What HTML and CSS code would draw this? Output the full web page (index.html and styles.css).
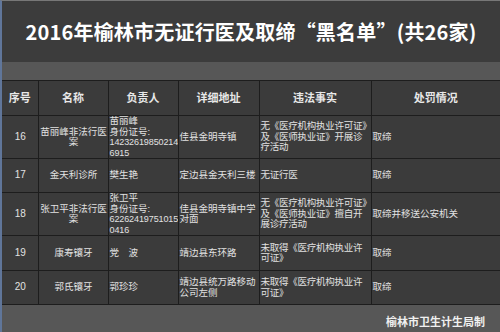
FILE: index.html
```html
<!DOCTYPE html>
<html lang="zh-CN">
<head>
<meta charset="utf-8">
<title>2016年榆林市无证行医及取缔黑名单</title>
<link rel="stylesheet" href="styles.css">
</head>
<body>
<div class="page">
  <div class="title">2016年榆林市无证行医及取缔“黑名单”(共26家)</div>
  <div class="band"></div>
  <table class="list">
    <thead>
      <tr class="r-head">
        <th class="c1">序号</th>
        <th class="c2">名称</th>
        <th class="c3">负责人</th>
        <th class="c4">详细地址</th>
        <th class="c5">违法事实</th>
        <th class="c6">处罚情况</th>
      </tr>
    </thead>
    <tbody>
      <tr class="r16">
        <td class="num">16</td>
        <td class="name">苗丽峰非法行医<br>案</td>
        <td class="txt">苗丽峰<br>身份证号:<br><span class="id">14232619850214</span><br><span class="id">6915</span></td>
        <td class="txt">佳县金明寺镇</td>
        <td class="txt fact">无《医疗机构执业许可证》<br>及《医师执业证》开展诊<br>疗活动</td>
        <td class="txt">取缔</td>
      </tr>
      <tr class="r17">
        <td class="num">17</td>
        <td class="name">金天利诊所</td>
        <td class="txt">樊生艳</td>
        <td class="txt clip">定边县金天利三楼</td>
        <td class="txt fact">无证行医</td>
        <td class="txt">取缔</td>
      </tr>
      <tr class="r18">
        <td class="num">18</td>
        <td class="name">张卫平非法行医<br>案</td>
        <td class="txt">张卫平<br>身份证号:<br><span class="id">62262419751015</span><br><span class="id">0416</span></td>
        <td class="txt">佳县金明寺镇中学<br>对面</td>
        <td class="txt fact">无《医疗机构执业许可证》<br>及《医师执业证》擅自开<br>展诊疗活动</td>
        <td class="txt">取缔并移送公安机关</td>
      </tr>
      <tr class="r19">
        <td class="num">19</td>
        <td class="name">康寿镶牙</td>
        <td class="txt">党　波</td>
        <td class="txt">靖边县东环路</td>
        <td class="txt fact">未取得《医疗机构执业许<br>可证》</td>
        <td class="txt">取缔</td>
      </tr>
      <tr class="r20">
        <td class="num">20</td>
        <td class="name">郭氏镶牙</td>
        <td class="txt">郭珍珍</td>
        <td class="txt clip">靖边县统万路移动<br>公司左侧</td>
        <td class="txt fact">未取得《医疗机构执业许<br>可证》</td>
        <td class="txt">取缔</td>
      </tr>
    </tbody>
  </table>
  <div class="footer">榆林市卫生计生局制</div>
</div>
</body>
</html>
```
FILE: styles.css
```css
html, body {
  margin: 0;
  padding: 0;
  width: 500px;
  height: 332px;
  overflow: hidden;
  background: #3c3c3c;
}

.page {
  box-sizing: border-box;
  width: 500px;
  height: 332px;
  border-left: 2px solid #60769a;
  border-top: 1px solid #777777;
  display: flex;
  flex-direction: column;
  background: #3c3c3c;
}

.title {
  height: 61px;
  flex: none;
  display: flex;
  align-items: center;
  justify-content: center;
  color: #ffffff;
  font-family: "Noto Sans CJK SC", sans-serif;
  font-weight: 700;
  font-size: 20px;
  letter-spacing: 0.2px;
  background: #3c3c3c;
}

.band {
  height: 18px;
  flex: none;
  background: #575757;
}

.list {
  width: 498px;
  flex: none;
  table-layout: fixed;
  border-collapse: collapse;
  background: #3b3b3b;
  color: #e2e2e2;
  font-family: "Liberation Sans", "Noto Sans CJK SC", sans-serif;
  font-size: 9.5px;
  line-height: 10.5px;
}

.list th,
.list td {
  box-sizing: border-box;
  border: 1px solid #1d1d1d;
  padding: 0 0 0 1px;
  vertical-align: middle;
  overflow: hidden;
  white-space: nowrap;
}

.list th:first-child,
.list td:first-child {
  border-left: none;
}

.list th:last-child,
.list td:last-child {
  border-right: none;
}

.list th {
  font-weight: 700;
  font-size: 11px;
  text-align: center;
  color: #e8e8e8;
  padding: 0;
}

.c1 { width: 36px; }
.c2 { width: 70px; }
.c3 { width: 70px; }
.c4 { width: 81px; }
.c5 { width: 112px; }
.c6 { width: 129px; }

.r-head th { height: 35px; }
.r16 td { height: 41px; }
.r17 td { height: 34px; }
.r18 td { height: 42px; }
.r19 td { height: 35px; }
.r20 td { height: 34px; }

.num {
  text-align: center;
  font-size: 10px;
}

.name {
  text-align: center;
}

.txt {
  text-align: left;
}

.fact {
  letter-spacing: -0.25px;
}

.id {
  font-size: 9px;
  letter-spacing: -0.1px;
}

.clip {
  text-overflow: clip;
}

.footer {
  flex: 1;
  background: #575757;
  color: #f0f0f0;
  font-family: "Noto Sans CJK SC", sans-serif;
  font-weight: 700;
  font-size: 11px;
  text-align: right;
  padding: 8px 15px 0 0;
  box-sizing: border-box;
}
```
